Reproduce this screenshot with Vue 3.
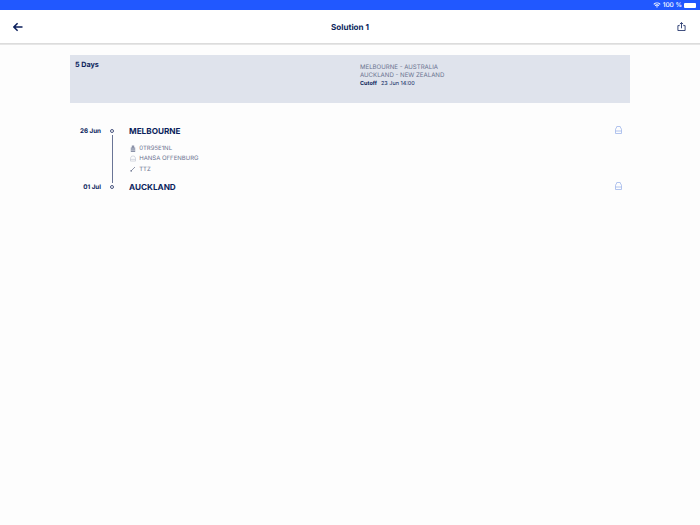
<script setup>
const stops = [
  { date: '26 Jun', name: 'MELBOURNE' },
  { date: '01 Jul', name: 'AUCKLAND' },
]
</script>

<template>
  <div class="page">
    <div class="status">
      <svg class="wifi" width="8" height="6" viewBox="0 0 9 7">
        <path d="M0.3 2.3A6 6 0 0 1 8.7 2.3L7.8 3.2A4.7 4.7 0 0 0 1.2 3.2Z" fill="#fff" />
        <path d="M1.9 3.9A3.7 3.7 0 0 1 7.1 3.9L6.2 4.8A2.4 2.4 0 0 0 2.8 4.8Z" fill="#fff" />
        <path d="M3.4 5.4A1.6 1.6 0 0 1 5.6 5.4L4.5 6.6Z" fill="#fff" />
      </svg>
      <span class="pct">100 %</span>
      <span class="battery"></span>
    </div>
    <header class="nav">
      <svg class="back" width="10" height="10" viewBox="0 0 10 10">
        <path d="M9.5 5H1M4.6 1.2L0.9 5L4.6 8.8" fill="none" stroke="#0b1f5c" stroke-width="1.5" />
      </svg>
      <h1 class="title">Solution 1</h1>
      <svg class="share" width="9" height="9" viewBox="0 0 10 10">
        <path d="M3 4H1v5.5h8V4H7M5 7V0.8M3.2 2.4L5 0.6l1.8 1.8" fill="none" stroke="#0b1f5c" stroke-width="0.9" />
      </svg>
    </header>
    <section class="summary">
      <div class="days">5 Days</div>
      <div class="route">
        <div>MELBOURNE - AUSTRALIA</div>
        <div>AUCKLAND - NEW ZEALAND</div>
        <div class="cutoff"><b>Cutoff</b><span>23 Jun 14:00</span></div>
      </div>
    </section>
    <section class="timeline">
      <div class="stop">
        <span class="date">{{ stops[0].date }}</span>
        <span class="dot"></span>
        <span class="name">{{ stops[0].name }}</span>
        <svg class="ship" width="7" height="8" viewBox="0 0 7 8">
          <path d="M0.5 7.5V3.2L1.8 1V0.5H5.2V1L6.5 3.2V7.5ZM0.5 5H6.5" fill="none" stroke="#a9bdec" stroke-width="0.9" />
        </svg>
      </div>
      <div class="leg">
        <div class="rail"></div>
        <ul class="details">
          <li>
            <svg width="6" height="7" viewBox="0 0 6 7"><path d="M0.8 7V2.5H1.8V0.5H4.2V2.5H5.2V7Z" fill="#8b92a8" /><path d="M1 4H5M1 5.5H5" stroke="#dfe1e8" stroke-width="0.5" /></svg>
            <span>0TR95E1NL</span>
          </li>
          <li>
            <svg width="7" height="7" viewBox="0 0 7 7"><path d="M0.5 6.5V3L2 0.7H5L6.5 3V6.5ZM0.5 4.5H6.5" fill="none" stroke="#bcc1cf" stroke-width="0.7" /></svg>
            <span>HANSA OFFENBURG</span>
          </li>
          <li>
            <svg width="6" height="6" viewBox="0 0 6 6"><path d="M1 5L5 1" stroke="#767e97" stroke-width="0.8" /><circle cx="1.2" cy="4.8" r="0.9" fill="#767e97" /></svg>
            <span>TTZ</span>
          </li>
        </ul>
      </div>
      <div class="stop">
        <span class="date">{{ stops[1].date }}</span>
        <span class="dot"></span>
        <span class="name">{{ stops[1].name }}</span>
        <svg class="ship" width="7" height="8" viewBox="0 0 7 8">
          <path d="M0.5 7.5V3.2L1.8 1V0.5H5.2V1L6.5 3.2V7.5ZM0.5 5H6.5" fill="none" stroke="#a9bdec" stroke-width="0.9" />
        </svg>
      </div>
    </section>
  </div>
</template>

<style scoped>
.page {
  width: 700px;
  height: 525px;
  background: #fdfdfd;
  font-family: Inter, "Liberation Sans", sans-serif;
  text-rendering: geometricPrecision;
  color: #0b1f5c;
  overflow: hidden;
}
.status {
  height: 10px;
  background: #2158ff;
  display: flex;
  align-items: center;
  justify-content: flex-end;
  padding-right: 4px;
  color: #fff;
  font-size: 6.5px;
  font-weight: 500;
}
.wifi { margin-right: 2px; }
.pct { margin-right: 2px; }
.battery {
  width: 12px;
  height: 5px;
  background: #fff;
  border-radius: 1px;
}
.nav {
  height: 33px;
  background: #fff;
  border-bottom: 1px solid #dcdcdc;
  box-shadow: 0 1px 0 #e6e6e6;
  display: flex;
  align-items: center;
  justify-content: space-between;
  padding: 0 14px 0 13px;
}
.title {
  margin: 0;
  font-size: 8.1px;
  font-weight: 700;
}
.summary {
  margin: 11px 70px 0;
  height: 48px;
  background: #dfe3ec;
  display: grid;
  grid-template-columns: 285px 1fr;
  padding: 5px;
  box-sizing: border-box;
}
.days { font-size: 7.2px; font-weight: 700; }
.route {
  padding-top: 4px;
  font-size: 6.1px;
  line-height: 7.5px;
  color: #6b7390;
}
.cutoff {
  display: flex;
  gap: 4px;
  color: #0b1f5c;
  font-size: 5.5px;
  margin-top: 1.5px;
}
.cutoff b { font-weight: 700; }
.timeline { margin: 22px 70px 0; }
.stop {
  display: grid;
  grid-template-columns: 31px 28px 1fr 7px;
  align-items: center;
  height: 12px;
  padding-right: 8px;
}
.date {
  font-size: 6.3px;
  font-weight: 700;
  text-align: right;
}
.dot {
  width: 4px;
  height: 4px;
  border: 1px solid #4a5680;
  border-radius: 50%;
  box-sizing: border-box;
  margin-left: 9px;
}
.name {
  font-size: 8.2px;
  font-weight: 700;
}
.ship { margin-top: -2px; }
.leg {
  display: flex;
  height: 44px;
}
.rail {
  width: 1px;
  height: 48px;
  margin: -2px 0 0 41.5px;
  background: #6a7596;
}
.details {
  list-style: none;
  margin: 0;
  padding: 6px 0 0 17px;
  font-size: 6px;
  color: #6b7390;
}
.details li {
  display: flex;
  align-items: center;
  height: 10.5px;
}
.details svg { width: 6px; margin-right: 3.2px; margin-left: 0.5px; }
</style>
